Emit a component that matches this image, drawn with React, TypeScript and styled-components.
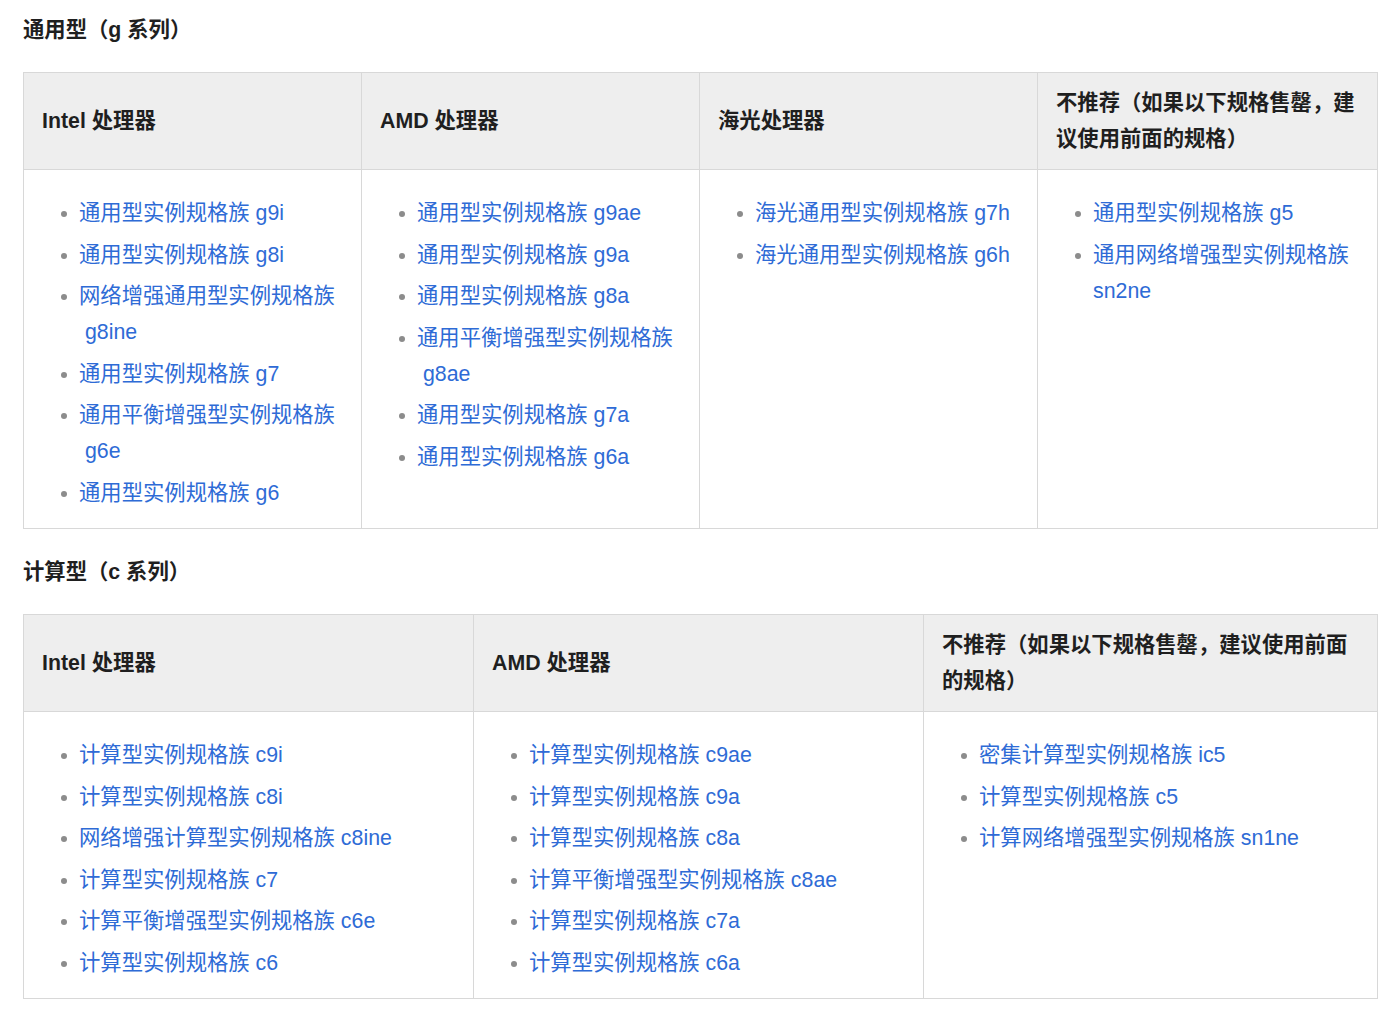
import React from "react";
import styled, { createGlobalStyle } from "styled-components";

const GlobalStyle = createGlobalStyle`
  html, body {
    margin: 0;
    padding: 0;
    background: #ffffff;
  }
  body {
    font-family: "Liberation Sans", "Noto Sans CJK SC", sans-serif;
    font-size: 21.33px;
    color: #222222;
    text-spacing-trim: space-all;
  }
`;

const Page = styled.div`
  padding: 12px 22px 24px 23px;
`;

const Title = styled.h3`
  margin: 0 0 24px;
  font-size: 21.33px;
  line-height: 36px;
  font-weight: 700;
  color: #1f1f1f;
  text-spacing-trim: space-all;
`;

const Table = styled.table`
  width: 100%;
  border-collapse: collapse;
  table-layout: fixed;
  margin-bottom: 25px;
`;

const Col = styled.col<{ $w?: number }>`
  width: ${(p) => (p.$w ? `${p.$w}px` : "auto")};
`;

const HeadCell = styled.th`
  background: #eeeeee;
  border: 1px solid #d8d8d8;
  padding: 12px 18px;
  text-align: left;
  vertical-align: middle;
  font-weight: 700;
  line-height: 36px;
  color: #1f1f1f;
  height: 72px;
`;

const BodyCell = styled.td`
  border: 1px solid #d8d8d8;
  padding: 18px 18px 17px;
  vertical-align: top;
`;

const List = styled.ul`
  list-style: none;
  margin: 7px 0 0;
  padding: 0 0 0 19px;
`;

const Item = styled.li`
  display: flex;
  align-items: flex-start;
  gap: 12px;
  line-height: 36px;
  & + & {
    margin-top: 5.6px;
  }
`;

const Dot = styled.span`
  flex: none;
  width: 6px;
  height: 6px;
  border-radius: 50%;
  background: #8c8c8c;
  margin-top: 16px;
`;

const Link = styled.a`
  color: #2e6bd6;
  text-decoration: none;
  min-width: 0;
`;

type Spec = {
  title: string;
  widths: (number | undefined)[];
  headers: string[];
  columns: string[][];
};

const sections: Spec[] = [
  {
    title: "通用型（g 系列）",
    widths: [338, 338, 338, undefined],
    headers: [
      "Intel 处理器",
      "AMD 处理器",
      "海光处理器",
      "不推荐（如果以下规格售罄，建议使用前面的规格）",
    ],
    columns: [
      [
        "通用型实例规格族 g9i",
        "通用型实例规格族 g8i",
        "网络增强通用型实例规格族 \u00a0g8ine",
        "通用型实例规格族 g7",
        "通用平衡增强型实例规格族 \u00a0g6e",
        "通用型实例规格族 g6",
      ],
      [
        "通用型实例规格族 g9ae",
        "通用型实例规格族 g9a",
        "通用型实例规格族 g8a",
        "通用平衡增强型实例规格族 \u00a0g8ae",
        "通用型实例规格族 g7a",
        "通用型实例规格族 g6a",
      ],
      ["海光通用型实例规格族 g7h", "海光通用型实例规格族 g6h"],
      ["通用型实例规格族 g5", "通用网络增强型实例规格族 sn2ne"],
    ],
  },
  {
    title: "计算型（c 系列）",
    widths: [450, 450, undefined],
    headers: [
      "Intel 处理器",
      "AMD 处理器",
      "不推荐（如果以下规格售罄，建议使用前面的规格）",
    ],
    columns: [
      [
        "计算型实例规格族 c9i",
        "计算型实例规格族 c8i",
        "网络增强计算型实例规格族 c8ine",
        "计算型实例规格族 c7",
        "计算平衡增强型实例规格族 c6e",
        "计算型实例规格族 c6",
      ],
      [
        "计算型实例规格族 c9ae",
        "计算型实例规格族 c9a",
        "计算型实例规格族 c8a",
        "计算平衡增强型实例规格族 c8ae",
        "计算型实例规格族 c7a",
        "计算型实例规格族 c6a",
      ],
      [
        "密集计算型实例规格族 ic5",
        "计算型实例规格族 c5",
        "计算网络增强型实例规格族 sn1ne",
      ],
    ],
  },
];

function Section({ spec }: { spec: Spec }) {
  return (
    <>
      <Title>{spec.title}</Title>
      <Table>
        <colgroup>
          {spec.widths.map((w, i) => (
            <Col key={i} $w={w} />
          ))}
        </colgroup>
        <thead>
          <tr>
            {spec.headers.map((h) => (
              <HeadCell key={h}>{h}</HeadCell>
            ))}
          </tr>
        </thead>
        <tbody>
          <tr>
            {spec.columns.map((items, i) => (
              <BodyCell key={i}>
                <List>
                  {items.map((t) => (
                    <Item key={t}>
                      <Dot />
                      <Link href="#">{t}</Link>
                    </Item>
                  ))}
                </List>
              </BodyCell>
            ))}
          </tr>
        </tbody>
      </Table>
    </>
  );
}

export default function App() {
  return (
    <Page>
      <GlobalStyle />
      {sections.map((s) => (
        <Section key={s.title} spec={s} />
      ))}
    </Page>
  );
}
